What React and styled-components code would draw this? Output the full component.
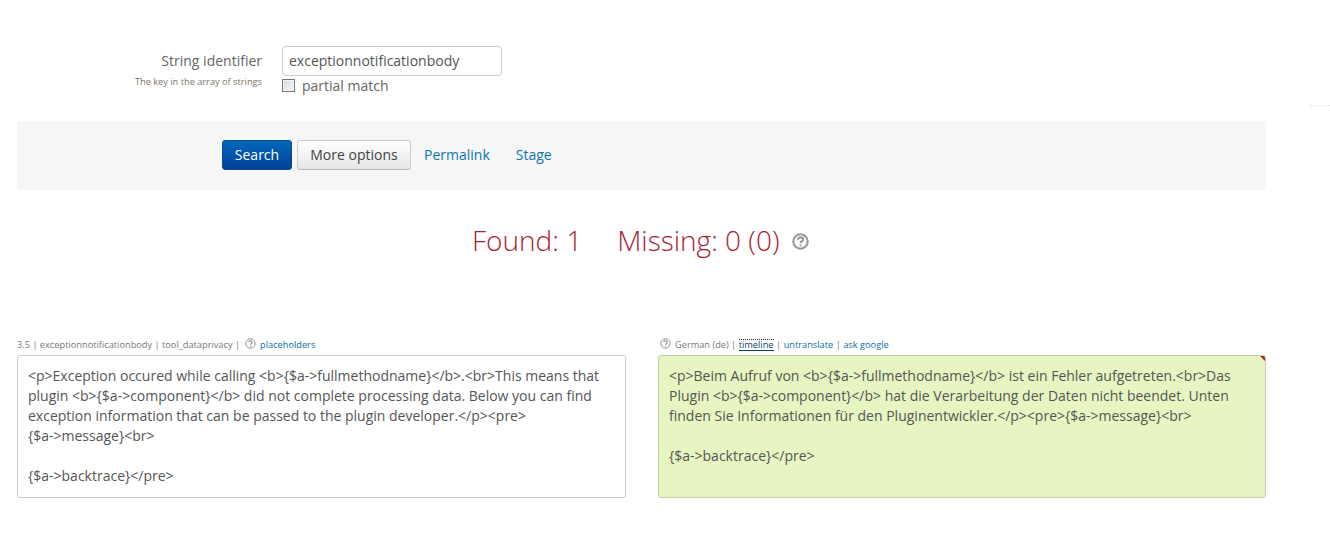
import React from 'react'
import styled, { createGlobalStyle } from 'styled-components'

const GlobalStyle = createGlobalStyle`
    html, body {
        margin: 0;
        padding: 0;
        background: #fff;
    }
    body {
        font-family: 'Open Sans', 'Liberation Sans', sans-serif;
        font-size: 14px;
        color: #555;
    }
`

const HelpIcon = ({ size = 11, color = '#8a8a8a', weight = 1 }) => (
    <svg width={size} height={size} viewBox="0 0 16 16" fill="none">
        <circle cx="8" cy="8" r="6.8" stroke={color} strokeWidth={weight * 1.4} />
        <path d="M5.6 6.3c0-1.4 1-2.2 2.4-2.2s2.4.8 2.4 2c0 1.9-2.4 1.8-2.4 3.6" stroke={color} strokeWidth={weight * 1.5} />
        <circle cx="8" cy="11.8" r="1" fill={color} />
    </svg>
)

const App = () => {
    return (
        <Page>
            <GlobalStyle />
            <DottedMark />
            <Form>
                <LabelCol>
                    <Label>String identifier</Label>
                    <Hint>The key in the array of strings</Hint>
                </LabelCol>
                <ControlCol>
                    <TextInput defaultValue="exceptionnotificationbody" readOnly />
                    <CheckRow>
                        <CheckBox />
                        <span>partial match</span>
                    </CheckRow>
                </ControlCol>
            </Form>
            <ActionBar>
                <PrimaryButton>Search</PrimaryButton>
                <DefaultButton>More options</DefaultButton>
                <BarLink>Permalink</BarLink>
                <BarLink>Stage</BarLink>
            </ActionBar>
            <Stats>
                <Stat>Found: 1</Stat>
                <Stat>Missing: 0 (0)</Stat>
                <StatHelp>
                    <HelpIcon size={17} color="#999" weight={1.4} />
                </StatHelp>
            </Stats>
            <Columns>
                <Column>
                    <Meta>
                        <span>3.5 | exceptionnotificationbody | tool_dataprivacy |</span>
                        <MetaHelp $before="1px">
                            <HelpIcon />
                        </MetaHelp>
                        <MetaLink>placeholders</MetaLink>
                    </Meta>
                    <TextBox>
                        {'<p>Exception occured while calling <b>{$a->fullmethodname}</b>.<br>This means that plugin <b>{$a->component}</b> did not complete processing data. Below you can find exception information that can be passed to the plugin developer.</p><pre>\n{$a->message}<br>\n\n{$a->backtrace}</pre>'}
                    </TextBox>
                </Column>
                <Column>
                    <Meta $translated>
                        <MetaHelp $after="1.5px">
                            <HelpIcon />
                        </MetaHelp>
                        <span>German (de) |</span>
                        <MetaLink $focused>timeline</MetaLink>
                        <span>|</span>
                        <MetaLink>untranslate</MetaLink>
                        <span>|</span>
                        <MetaLink>ask google</MetaLink>
                    </Meta>
                    <TextBox $translated>
                        {'<p>Beim Aufruf von <b>{$a->fullmethodname}</b> ist ein Fehler aufgetreten.<br>Das Plugin <b>{$a->component}</b> hat die Verarbeitung der Daten nicht beendet. Unten finden Sie Informationen für den Pluginentwickler.</p><pre>{$a->message}<br>\n\n{$a->backtrace}</pre>'}
                        <Corner />
                    </TextBox>
                </Column>
            </Columns>
        </Page>
    )
}

const Page = styled.div`
    position: relative;
    width: 1330px;
    height: 537px;
    padding: 46px 64px 0 17px;
    box-sizing: border-box;
    overflow: hidden;
`

const DottedMark = styled.div`
    position: absolute;
    top: 105px;
    right: 0;
    width: 20px;
    border-top: 1px dotted #e4e4e4;
`

const Form = styled.div`
    display: flex;
    gap: 20px;
    height: 75px;
`

const LabelCol = styled.div`
    width: 245px;
    text-align: right;
`

const Label = styled.div`
    font-size: 14px;
    line-height: 20px;
    padding-top: 5px;
    color: #666;
`

const Hint = styled.div`
    font-size: 9.24px;
    line-height: 12px;
    margin-top: 5px;
    color: #7d7468;
`

const ControlCol = styled.div`
    display: flex;
    flex-direction: column;
`

const TextInput = styled.input`
    width: 220px;
    height: 30px;
    box-sizing: border-box;
    padding: 0 6px 2px;
    border: 1px solid #ccc;
    border-radius: 4px;
    font: 14px 'Open Sans', sans-serif;
    color: #555;
    outline: none;
`

const CheckRow = styled.label`
    display: flex;
    align-items: center;
    gap: 7px;
    height: 20px;
    margin-top: -1px;
    font-size: 14px;
    color: #666;
`

const CheckBox = styled.span`
    display: block;
    width: 13px;
    height: 13px;
    box-sizing: border-box;
    border: 1px solid #777;
    box-shadow: inset 0 0 0 1px #f4f4f4;
    background: linear-gradient(135deg, #d8d8d8, #fafafa);
`

const ActionBar = styled.div`
    display: flex;
    align-items: center;
    height: 69px;
    box-sizing: border-box;
    padding: 0 0 1px 205px;
    background: #f6f6f6;
`

const PrimaryButton = styled.button`
    width: 70px;
    height: 30px;
    padding: 0 0 2px;
    border: 1px solid #0a4a94;
    border-radius: 3px;
    background: linear-gradient(#0068b8, #003f9c);
    color: #fff;
    font: 14px 'Open Sans', sans-serif;
`

const DefaultButton = styled.button`
    width: 114px;
    height: 30px;
    margin-left: 5px;
    padding: 0 0 2px;
    border: 1px solid #ccc;
    border-bottom-color: #b8b8b8;
    border-radius: 3px;
    background: linear-gradient(#fff, #e6e6e6);
    color: #444;
    font: 14px 'Open Sans', sans-serif;
`

const BarLink = styled.a`
    margin: 0 13px;
    padding-bottom: 2px;
    color: #0a78b0;
    font-size: 14px;
`

const Stats = styled.div`
    display: flex;
    align-items: center;
    gap: 35px;
    height: 99px;
    padding-left: 455px;
    box-sizing: border-box;
`

const Stat = styled.span`
    font-size: 28px;
    font-weight: 300;
    color: #a81e36;
`

const StatHelp = styled.span`
    display: flex;
    margin: 4px 0 0 -23px;
`

const Columns = styled.div`
    display: grid;
    grid-template-columns: 609px 608px;
    gap: 32px;
    margin-top: 47px;
`

const Column = styled.div`
    display: flex;
    flex-direction: column;
`

const Meta = styled.div`
    display: flex;
    align-items: center;
    gap: ${(p) => (p.$translated ? '2.5px' : '4px')};
    height: 19px;
    box-sizing: border-box;
    padding: 0 0 2px ${(p) => (p.$translated ? '2px' : '0')};
    font-size: 9.24px;
    color: #777;
    white-space: pre;
`

const MetaHelp = styled.span`
    display: flex;
    margin: -2px ${(p) => p.$after || '0'} 0 ${(p) => p.$before || '0'};
`

const MetaLink = styled.a`
    color: #0a6ea8;
    ${(p) => p.$focused && `
        color: #0a3f66;
        line-height: 10px;
        border-top: 1px dotted #222;
        border-bottom: 1px solid #0a3f66;
    `}
`

const TextBox = styled.div`
    position: relative;
    height: 143px;
    box-sizing: border-box;
    padding: 10px;
    border: 1px solid ${(p) => (p.$translated ? '#c4d0aa' : '#ccc')};
    border-radius: 3px;
    background: ${(p) => (p.$translated ? '#e6f5c2' : '#fff')};
    font-size: 14px;
    line-height: 20px;
    color: #555;
    white-space: pre-wrap;
    overflow: hidden;
`

const Corner = styled.div`
    position: absolute;
    top: 0;
    right: 0;
    width: 0;
    height: 0;
    border-top: 5px solid #a81e36;
    border-left: 5px solid transparent;
`

export default App
